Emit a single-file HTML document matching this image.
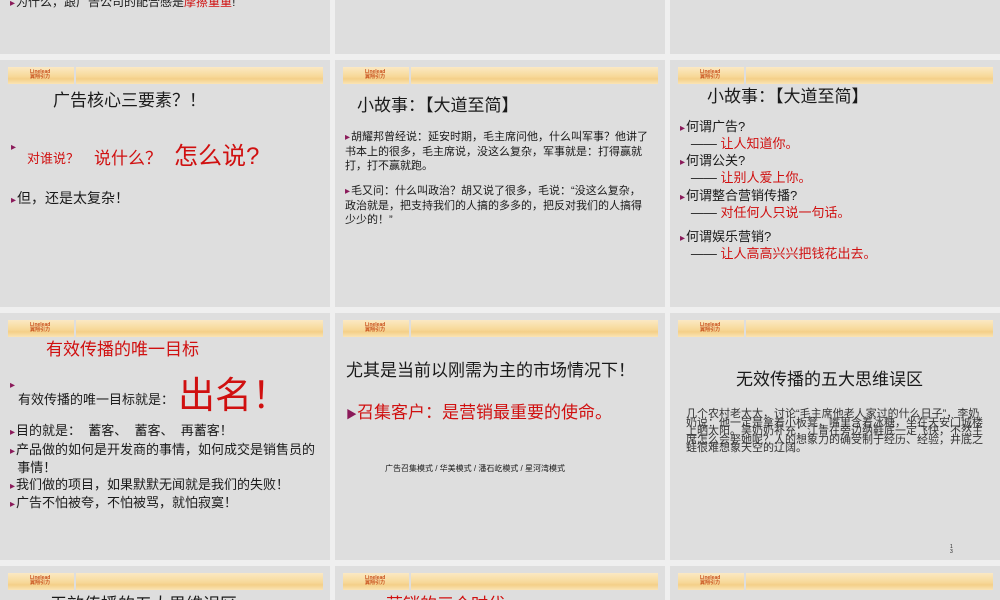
<!DOCTYPE html>
<html style="width:1000px;height:600px;overflow:hidden"><head><meta charset="utf-8"><style>
*{margin:0;padding:0;box-sizing:border-box}
body{width:1000px;height:600px;background:#efefef;position:relative;overflow:hidden;font-family:"Liberation Sans","Noto Sans CJK SC",sans-serif;color:#1a1a1a}
.s{position:absolute;width:330px;height:247px;background:#dedede;overflow:hidden}
.h1{position:absolute;left:8px;top:7px;width:66px;height:17px;background:linear-gradient(#fbe9c4,#f7d999 55%,#f4cf88 70%,#fae4b5)}
.h2{position:absolute;left:76px;top:7px;width:247px;height:17px;background:linear-gradient(#fbe9c4,#f7d999 55%,#f4cf88 70%,#fae4b5)}
.lg{position:absolute;left:22px;top:3px;font-size:5px;line-height:5px;color:#c8501c;font-weight:bold}
.t{position:absolute;white-space:nowrap}
.r{color:#d01010}
.b{color:#8b1a5a;font-size:10px;margin-right:1px}
.p{position:absolute;font-size:11px;line-height:14px}
</style></head><body>
<div class="s" style="left:0;top:-193px"><div class="t" style="left:10px;top:186px;font-size:12px"><span class="b">▸</span>为什么，跟广告公司的配合感是<span class="r">摩擦重重</span>!</div></div>
<div class="s" style="left:335px;top:-193px"></div>
<div class="s" style="left:670px;top:-193px"></div>

<div class="s" style="left:0;top:60px"><div class="h1"><div class="lg">Linelead<br>翼翔引力</div></div><div class="h2"></div>
<div class="t" style="left:53px;top:26px;font-size:17px">广告核心三要素？！</div>
<div class="t" style="left:11px;top:82px;font-size:10px;color:#8b1a5a">▸</div>
<div class="t r" style="left:27px;top:88px;font-size:13px">对谁说？</div>
<div class="t r" style="left:94px;top:84px;font-size:17px">说什么？</div>
<div class="t r" style="left:174px;top:76px;font-size:24px">怎么说?</div>
<div class="t" style="left:11px;top:128px;font-size:14px"><span class="b">▸</span>但，还是太复杂！</div>
</div>

<div class="s" style="left:335px;top:60px"><div class="h1"><div class="lg">Linelead<br>翼翔引力</div></div><div class="h2"></div>
<div class="t" style="left:22px;top:31px;font-size:17px">小故事：【大道至简】</div>
<div class="p" style="left:10px;top:70px;width:305px"><span class="b">▸</span>胡耀邦曾经说：延安时期，毛主席问他，什么叫军事？他讲了书本上的很多，毛主席说，没这么复杂，军事就是：打得赢就打，打不赢就跑。</div>
<div class="p" style="left:10px;top:124px;width:305px"><span class="b">▸</span>毛又问：什么叫政治？胡又说了很多，毛说：“没这么复杂，政治就是，把支持我们的人搞的多多的，把反对我们的人搞得少少的！”</div>
</div>

<div class="s" style="left:670px;top:60px"><div class="h1"><div class="lg">Linelead<br>翼翔引力</div></div><div class="h2"></div>
<div class="t" style="left:37px;top:22px;font-size:17px">小故事：【大道至简】</div>
<div class="t" style="left:10px;top:59px;font-size:13px;line-height:15px"><span class="b">▸</span>何谓广告?<br>&nbsp;&nbsp;&nbsp;—— <span class="r">让人知道你。</span></div>
<div class="t" style="left:10px;top:93px;font-size:13px;line-height:15px"><span class="b">▸</span>何谓公关?<br>&nbsp;&nbsp;&nbsp;—— <span class="r">让别人爱上你。</span></div>
<div class="t" style="left:10px;top:128px;font-size:13px;line-height:15px"><span class="b">▸</span>何谓整合营销传播?<br>&nbsp;&nbsp;&nbsp;—— <span class="r">对任何人只说一句话。</span></div>
<div class="t" style="left:10px;top:169px;font-size:13px;line-height:15px"><span class="b">▸</span>何谓娱乐营销?<br>&nbsp;&nbsp;&nbsp;—— <span class="r">让人高高兴兴把钱花出去。</span></div>
</div>

<div class="s" style="left:0;top:313px"><div class="h1"><div class="lg">Linelead<br>翼翔引力</div></div><div class="h2"></div>
<div class="t r" style="left:46px;top:22px;font-size:17px">有效传播的唯一目标</div>
<div class="t" style="left:10px;top:67px;font-size:10px;color:#8b1a5a">▸</div>
<div class="t" style="left:18px;top:76px;font-size:13px">有效传播的唯一目标就是：</div>
<div class="t r" style="left:178px;top:52px;font-size:37px">出名！</div>
<div class="t" style="left:10px;top:110px;font-size:13px;line-height:16.5px"><span class="b">▸</span>目的就是：&nbsp; 蓄客、&nbsp; 蓄客、&nbsp; 再蓄客！<br><span class="b">▸</span>产品做的如何是开发商的事情，如何成交是销售员的<br>&nbsp;&nbsp;事情！<br><span class="b">▸</span>我们做的项目，如果默默无闻就是我们的失败！<br><span class="b">▸</span>广告不怕被夸，不怕被骂，就怕寂寞！</div>
</div>

<div class="s" style="left:335px;top:313px"><div class="h1"><div class="lg">Linelead<br>翼翔引力</div></div><div class="h2"></div>
<div class="t" style="left:11px;top:43px;font-size:17px">尤其是当前以刚需为主的市场情况下！</div>
<div class="t r" style="left:11px;top:85px;font-size:17px"><span style="color:#8b1a5a;font-size:11px">▶</span>召集客户：是营销最重要的使命。</div>
<div class="t" style="left:50px;top:150px;font-size:8px">广告召集模式 / 华美模式 / 潘石屹模式 / 星河湾模式</div>
</div>

<div class="s" style="left:670px;top:313px"><div class="h1"><div class="lg">Linelead<br>翼翔引力</div></div><div class="h2"></div>
<div class="t" style="left:66px;top:52px;font-size:17px">无效传播的五大思维误区</div>
<div class="p" style="left:16px;top:97px;width:302px;line-height:8.5px;font-size:11px;color:#333">几个农村老太太，讨论“毛主席他老人家过的什么日子”，李奶奶说：他一定是拿着小板凳，嘴里含着冰糖，坐在天安门城楼上晒太阳。吴奶奶补充：江青在旁边纳鞋底一定飞快，不然主席怎么会娶她呢？人的想象力的确受制于经历、经验，井底之蛙很难想象天空的辽阔。</div>
<div class="t" style="left:280px;top:232px;font-size:5px;line-height:5px">1<br>3</div>
</div>

<div class="s" style="left:0;top:566px;height:34px"><div class="h1"><div class="lg">Linelead<br>翼翔引力</div></div><div class="h2"></div>
<div class="t" style="left:50px;top:24px;font-size:17px">无效传播的五大思维误区</div></div>
<div class="s" style="left:335px;top:566px;height:34px"><div class="h1"><div class="lg">Linelead<br>翼翔引力</div></div><div class="h2"></div>
<div class="t r" style="left:51px;top:24px;font-size:17px">营销的三个时代</div></div>
<div class="s" style="left:670px;top:566px;height:34px"><div class="h1"><div class="lg">Linelead<br>翼翔引力</div></div><div class="h2"></div></div>
</body></html>
